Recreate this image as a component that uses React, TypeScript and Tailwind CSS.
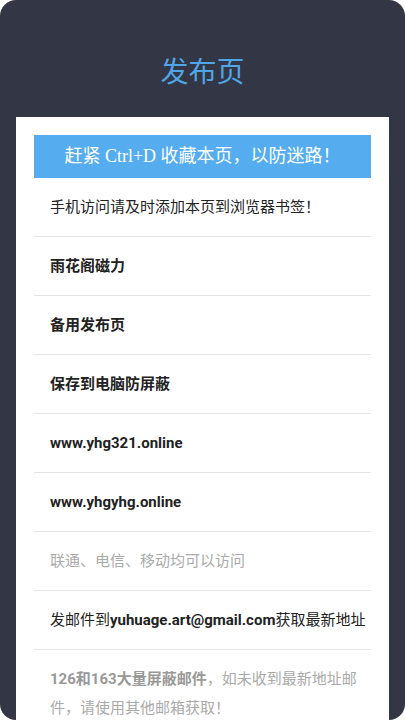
import React from 'react';

const rowText = "font-['Roboto','Noto_Sans_CJK_SC',sans-serif]";

export default function App() {
  return (
    <div className="bg-white">
      <div className="h-[720px] overflow-hidden rounded-[16px] bg-[#333644]">
        {/* Header */}
        <div className="pt-[50px] pb-[27px] text-center">
          <h1 className="font-['Noto_Sans_CJK_SC',sans-serif] text-[28px] leading-[40px] text-[#4fa6e6]">发布页</h1>
        </div>

        {/* Card */}
        <div className="mx-4 bg-white px-[18px] pt-[18px] pb-6">
          <div className="flex h-[43px] items-center justify-center bg-[#55acee] font-['Liberation_Serif','Noto_Sans_CJK_SC',serif] text-[18px] text-white">
            赶紧 Ctrl+D 收藏本页，以防迷路！
          </div>

          <ul className={`${rowText} text-[15px] text-[#222]`}>
            <li className="border-b border-[#e6e6e6] px-4 py-[19px] leading-5">手机访问请及时添加本页到浏览器书签！</li>
            <li className="border-b border-[#e6e6e6] px-4 py-[19px] leading-5 font-bold">雨花阁磁力</li>
            <li className="border-b border-[#e6e6e6] px-4 py-[19px] leading-5 font-bold">备用发布页</li>
            <li className="border-b border-[#e6e6e6] px-4 py-[19px] leading-5 font-bold">保存到电脑防屏蔽</li>
            <li className="border-b border-[#e6e6e6] px-4 py-[19px] leading-5 font-bold">www.yhg321.online</li>
            <li className="border-b border-[#e6e6e6] px-4 py-[19px] leading-5 font-bold">www.yhgyhg.online</li>
            <li className="border-b border-[#e6e6e6] px-4 py-[19px] leading-5 text-[#aaaaaa]">联通、电信、移动均可以访问</li>
            <li className="border-b border-[#e6e6e6] px-4 py-[19px] leading-5 whitespace-nowrap">
              发邮件到<span className="font-bold">yuhuage.art@gmail.com</span>获取最新地址
            </li>
            <li className="pl-4 pr-3 py-[15px] leading-[29px] text-[#aaaaaa]">
              <span className="font-bold text-[#999999]">126和163大量屏蔽邮件</span>，如未收到最新地址邮件，请使用其他邮箱获取！
            </li>
          </ul>
        </div>
      </div>
    </div>
  );
}
